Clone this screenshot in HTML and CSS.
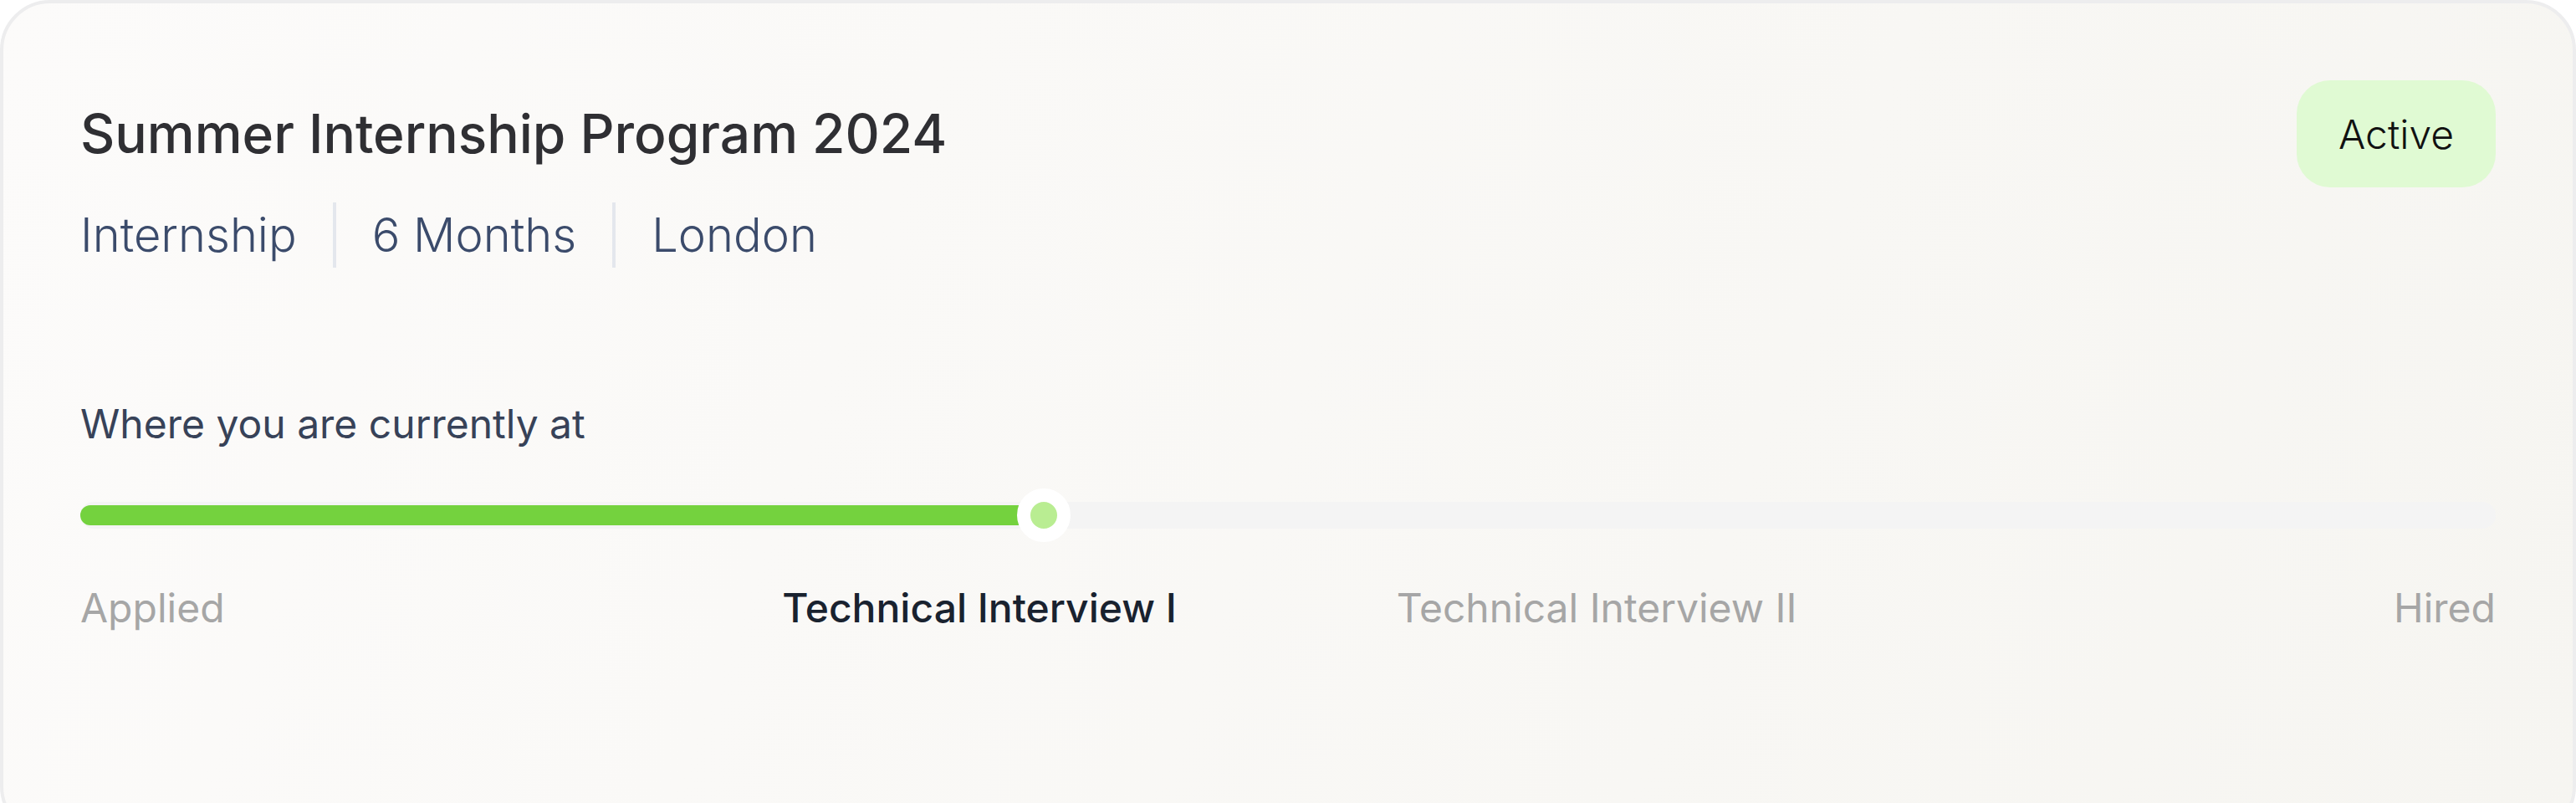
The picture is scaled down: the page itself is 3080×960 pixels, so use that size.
FILE: index.html
```html
<!DOCTYPE html>
<html lang="en">
<head>
    <meta charset="UTF-8">
    <meta name="viewport" content="width=device-width, initial-scale=1.0">
    <title>Application Status</title>
    <link rel="stylesheet" href="styles.css">
</head>
<body>
    <div class="job-card">
        <div class="job-head">
            <h1>Summer Internship Program 2024</h1>
            <span class="status-badge">Active</span>
        </div>
        <div class="job-meta">
            <span>Internship</span>
            <span>6 Months</span>
            <span>London</span>
        </div>

        <div class="progress-section">
            <p class="progress-title">Where you are currently at</p>
            <div class="progress-track">
                <div class="progress-fill" style="width: 39.9%"></div>
                <div class="progress-knob" style="left: 39.9%"></div>
            </div>
            <div class="stages">
                <span class="stage">Applied</span>
                <span class="stage current">Technical Interview I</span>
                <span class="stage">Technical Interview II</span>
                <span class="stage">Hired</span>
            </div>
        </div>
    </div>
</body>
</html>
```

FILE: styles.css
```css
body {
    margin: 0;
    background: #fff;
    font-family: Inter, "Noto Sans", sans-serif;
}

.job-card {
    box-sizing: border-box;
    min-height: 1000px;
    border: 4px solid #ededee;
    border-radius: 60px;
    padding: 92px;
    background: linear-gradient(110deg, #fcfbfa 0%, #f6f5f1 100%);
}

.job-head {
    display: flex;
    justify-content: space-between;
    align-items: center;
}

.job-head h1 {
    margin: 0;
    font-size: 64px;
    font-weight: 500;
    line-height: 1.2;
    color: #2f2f33;
}

.status-badge {
    display: flex;
    align-items: center;
    height: 128px;
    padding: 0 50px;
    box-sizing: border-box;
    border-radius: 40px;
    background: #e0fad3;
    font-size: 48px;
    font-weight: 300;
    color: #111;
}

.job-meta {
    display: flex;
    margin-top: 18px;
    font-size: 56px;
    font-weight: 300;
    line-height: 78px;
    color: #3b4b6b;
}

.job-meta span {
    padding: 0 43px;
    border-left: 4px solid #e4e7ed;
}

.job-meta span:first-child {
    padding-left: 0;
    border-left: none;
}

.progress-section {
    margin-top: 158px;
}

.progress-title {
    margin: 0;
    font-size: 48px;
    line-height: 1.21;
    color: #374258;
}

.progress-track {
    position: relative;
    margin-top: 64px;
    padding: 4px 0;
    height: 24px;
    border-radius: 16px;
    background: #f4f4f4;
}

.progress-fill {
    height: 24px;
    border-radius: 12px;
    background: #74d23e;
}

.progress-knob {
    position: absolute;
    top: 50%;
    width: 32px;
    height: 32px;
    border: 16px solid #fff;
    border-radius: 50%;
    background: #b9ed92;
    transform: translate(-50%, -50%);
}

.stages {
    display: grid;
    grid-template-columns: repeat(4, 1fr);
    gap: 64px;
    margin-top: 66px;
    font-size: 48px;
    line-height: 1.21;
    color: #a6a6a6;
}

.stage:nth-child(2),
.stage:nth-child(3) {
    text-align: center;
}

.stage:last-child {
    text-align: right;
}

.stage.current {
    font-weight: 500;
    color: #19222f;
}
```
